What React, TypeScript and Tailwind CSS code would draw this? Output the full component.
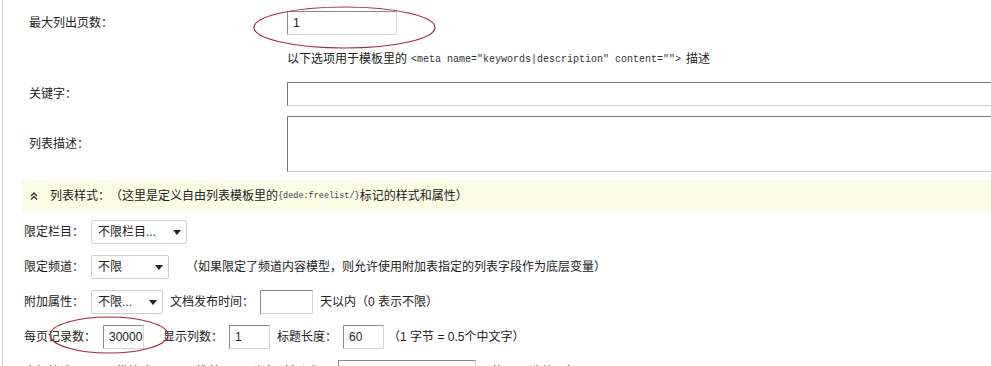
const cjk = { fontFamily: '"Liberation Sans", "Noto Sans CJK SC", sans-serif' }
const mono = { fontFamily: '"Liberation Mono", "Noto Sans CJK SC", monospace' }

function Select({ text, width }: { text: string; width: string }) {
  return (
    <div className={`flex h-[24px] ${width} items-center justify-between rounded-[2px] border border-[#cfcfcf] bg-white pl-[6px] pr-[5px]`}>
      <span>{text}</span>
      <svg width="8" height="5" viewBox="0 0 8 5">
        <path d="M0 0 L8 0 L4 5 Z" fill="#222" />
      </svg>
    </div>
  )
}

function Box({ value, width }: { value?: string; width: string }) {
  return (
    <div className={`flex h-[24px] ${width} shrink-0 items-center overflow-hidden whitespace-nowrap border border-t-[#8c8c8c] border-l-[#8c8c8c] border-r-[#d6d6d6] border-b-[#d6d6d6] bg-white pl-[5px]`}>
      {value}
    </div>
  )
}

function Check({ label }: { label: string }) {
  return (
    <span className="flex items-center gap-[8px]">
      <span className="h-[12px] w-[12px] border border-[#8c8c8c] bg-[#ececec]" />
      <span>{label}</span>
    </span>
  )
}

export default function App() {
  return (
    <div className="relative h-[366px] w-[991px] overflow-hidden bg-white pl-[2px] text-[12px] text-[#222] [text-spacing-trim:space-all]" style={cjk}>
      <div className="h-full border-l border-[#d2d2d2]">
        {/* 顶部表单 */}
        <div className="flex h-[47px] items-start pt-[11px]">
          <div className="w-[284px] shrink-0 pl-[26px] leading-[24px]">最大列出页数：</div>
          <Box value="1" width="w-[110px]" />
        </div>
        <div className="flex h-[24px] items-center whitespace-nowrap">
          <div className="w-[284px] shrink-0" />
          <span>以下选项用于模板里的</span>
          <span className="ml-[4px] text-[10px] text-[#333]" style={mono}>{'<meta name="keywords|description" content="">'}</span>
          <span className="ml-[5px]">描述</span>
        </div>
        <div className="flex h-[40px] items-start pt-[11px]">
          <div className="w-[284px] shrink-0 pl-[26px] leading-[24px]">关键字：</div>
          <div className="h-[24px] w-[720px] shrink-0 border border-t-[#777] border-l-[#777] border-r-[#d0d0d0] border-b-[#d0d0d0]" />
        </div>
        <div className="flex items-center pt-[5px] pb-[8px]">
          <div className="w-[284px] shrink-0 pl-[26px]">列表描述：</div>
          <div className="h-[56px] w-[720px] shrink-0 border border-t-[#777] border-l-[#777] border-r-[#c8c8c8] border-b-[#c8c8c8]" />
        </div>

        {/* 列表样式 */}
        <div className="ml-[19px] flex h-[32px] items-center whitespace-nowrap bg-[#fafce5] pl-[8px]">
          <svg width="8" height="8" viewBox="0 0 8 8" fill="none" stroke="#333" strokeWidth="1.3">
            <path d="M1 4 L4 1 L7 4" />
            <path d="M1 7.5 L4 4.5 L7 7.5" />
          </svg>
          <span className="ml-[12px]">列表样式：（这里是定义自由列表模板里的</span>
          <span className="text-[8.5px] text-[#444]" style={mono}>{'{dede:freelist/}'}</span>
          <span>标记的样式和属性）</span>
        </div>

        <div className="flex flex-col gap-[11px] pt-[8px] pl-[21px] whitespace-nowrap">
          <div className="flex h-[24px] items-center">
            <span>限定栏目：</span>
            <div className="ml-[7px]"><Select text="不限栏目..." width="w-[96px]" /></div>
          </div>
          <div className="flex h-[24px] items-center">
            <span>限定频道：</span>
            <div className="ml-[7px]"><Select text="不限" width="w-[78px]" /></div>
            <span className="ml-[17px]">（如果限定了频道内容模型，则允许使用附加表指定的列表字段作为底层变量）</span>
          </div>
          <div className="flex h-[24px] items-center">
            <span>附加属性：</span>
            <div className="ml-[7px]"><Select text="不限..." width="w-[72px]" /></div>
            <span className="ml-[7px]">文档发布时间：</span>
            <div className="ml-[6px]"><Box width="w-[53px]" /></div>
            <span className="ml-[7px]">天以内（0 表示不限）</span>
          </div>
          <div className="flex h-[24px] items-center">
            <span>每页记录数：</span>
            <div className="ml-[7px]"><Box value="300000" width="w-[41px]" /></div>
            <span className="ml-[19px]">显示列数：</span>
            <div className="ml-[6px]"><Box value="1" width="w-[41px]" /></div>
            <span className="ml-[7px]">标题长度：</span>
            <div className="ml-[6px]"><Box value="60" width="w-[41px]" /></div>
            <span className="ml-[4px]">（1 字节 = 0.5个中文字）</span>
          </div>
          <div className="flex h-[24px] items-center">
            <span>高级筛选：</span>
            <div className="ml-[12px] flex items-center gap-[12px]">
              <Check label="带缩略图" />
              <Check label="推荐" />
              <Check label="头条（必须）" />
            </div>
            <div className="ml-[14px]"><Box width="w-[138px]" /></div>
            <span className="ml-[8px]">（如: '可选共同'）</span>
          </div>
        </div>
      </div>

      {/* 红色标注圈 */}
      <svg className="pointer-events-none absolute left-0 top-0" width="991" height="366">
        <ellipse cx="344.5" cy="27.5" rx="90.5" ry="20.5" fill="none" stroke="#a32a3c" strokeWidth="1.2" />
        <ellipse cx="109" cy="335" rx="59" ry="18" fill="none" stroke="#a32a3c" strokeWidth="1.2" />
      </svg>
    </div>
  )
}
